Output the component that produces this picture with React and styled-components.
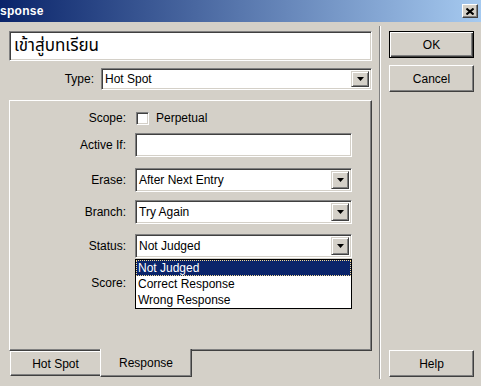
import React from 'react'
import styled, { createGlobalStyle } from 'styled-components'

const Global = createGlobalStyle`
  html, body {
    margin: 0;
    padding: 0;
    background: #d4d0c8;
  }
  body {
    font-family: "Liberation Sans", Arial, sans-serif;
    font-size: 12px;
    color: #000;
  }
`

const Window = styled.div`
  width: 481px;
  height: 386px;
  background: #d4d0c8;
  overflow: hidden;
`

const TitleBar = styled.div`
  height: 22px;
  display: flex;
  align-items: center;
  justify-content: space-between;
  background: linear-gradient(to right, #0a246a, #a6caf0);
  padding: 0 3px 0 0;
  box-sizing: border-box;
`

const Title = styled.span`
  color: #fff;
  font-weight: bold;
  font-size: 12px;
  letter-spacing: 0.3px;
`

const CloseBtn = styled.div`
  width: 16px;
  height: 14px;
  box-sizing: border-box;
  background: #d4d0c8;
  border: 1px solid;
  border-color: #fff #404040 #404040 #fff;
  box-shadow: inset -1px -1px #808080;
  display: flex;
  align-items: center;
  justify-content: center;
`

const Body = styled.div`
  display: flex;
  height: 364px;
  padding-left: 9px;
`

const LeftCol = styled.div`
  width: 363px;
  display: flex;
  flex-direction: column;
  padding-top: 9px;
`

const Separator = styled.div`
  width: 1px;
  margin: 4px 8px 7px 7px;
  background: #808080;
  border-right: 1px solid #fff;
`

const RightCol = styled.div`
  width: 85px;
  display: flex;
  flex-direction: column;
  gap: 7px;
  padding: 9px 0 9px;
`

const sunken = `
  box-sizing: border-box;
  background: #fff;
  border: 1px solid;
  border-color: #808080 #fff #fff #808080;
  box-shadow: inset 1px 1px #404040, inset -1px -1px #d4d0c8;
`

const NameField = styled.div`
  ${sunken}
  height: 30px;
  display: flex;
  align-items: center;
  padding-left: 4px;
  font-family: "Noto Sans Thai", "Noto Sans", "DejaVu Sans", sans-serif;
  font-size: 17px;
`

const TypeRow = styled.div`
  display: flex;
  align-items: center;
  justify-content: flex-end;
  gap: 7px;
  margin-top: 7px;
`

const Label = styled.span`
  text-align: right;
  white-space: nowrap;
`

const SelectBox = styled.div`
  ${sunken}
  width: ${p => p.$w}px;
  height: ${p => p.$h}px;
  display: flex;
  align-items: center;
  padding: 2px 2px 2px 3px;
`

const SelectText = styled.span`
  flex: 1;
  white-space: nowrap;
`

const ArrowBtn = styled.div`
  width: 18px;
  height: 100%;
  box-sizing: border-box;
  background: #d4d0c8;
  border: 1px solid;
  border-color: #d4d0c8 #404040 #404040 #d4d0c8;
  box-shadow: inset 1px 1px #fff, inset -1px -1px #808080;
  display: flex;
  align-items: center;
  justify-content: center;
`

const Panel = styled.div`
  margin-top: 10px;
  height: 251px;
  box-sizing: border-box;
  border: 1px solid;
  border-color: #fff #404040 #404040 #fff;
  box-shadow: inset -1px -1px #808080;
`

const Row = styled.div`
  display: grid;
  grid-template-columns: 116px 217px;
  column-gap: 9px;
  align-items: center;
  height: ${p => p.$h}px;
  margin-top: ${p => p.$mt}px;
`

const Cell = styled.div`
  position: relative;
  display: flex;
  align-items: center;
  gap: 7px;
  height: 100%;
`

const Check = styled.div`
  ${sunken}
  width: 13px;
  height: 13px;
  margin-left: 1px;
`

const TextBox = styled.div`
  ${sunken}
  width: ${p => p.$w}px;
  height: 24px;
`

const DropList = styled.div`
  position: absolute;
  top: 25px;
  left: 0;
  width: 217px;
  box-sizing: border-box;
  background: #fff;
  border: 1px solid #000;
  z-index: 2;
`

const Item = styled.div`
  height: 16px;
  line-height: 16px;
  padding-left: 2px;
  box-sizing: border-box;
  background: ${p => (p.$active ? '#0a246a' : '#fff')};
  color: ${p => (p.$active ? '#fff' : '#000')};
  outline: ${p => (p.$active ? '1px dotted #f5db95' : 'none')};
  outline-offset: -1px;
`

const TabStrip = styled.div`
  display: flex;
`

const Tab = styled.div`
  position: ${p => (p.$active ? 'relative' : 'static')};
  width: ${p => p.$w}px;
  height: ${p => (p.$active ? 28 : 25)}px;
  margin-top: ${p => (p.$active ? -2 : 0)}px;
  margin-left: ${p => (p.$active ? 0 : 1)}px;
  box-sizing: border-box;
  background: #d4d0c8;
  border-left: 1px solid #fff;
  border-top: ${p => (p.$active ? 'none' : '1px solid #fff')};
  border-right: ${p => (p.$active ? '1px solid #404040' : 'none')};
  border-bottom: 1px solid #404040;
  box-shadow: ${p => (p.$active ? 'inset -1px -1px #808080' : 'inset 0 -1px #808080')};
  display: flex;
  align-items: center;
  justify-content: center;
  padding-top: ${p => (p.$active ? 1 : 0)}px;
`

const Button = styled.div`
  height: 27px;
  box-sizing: border-box;
  display: flex;
  align-items: center;
  justify-content: center;
  border: 1px solid;
  border-color: ${p => (p.$default ? '#000' : '#fff #404040 #404040 #fff')};
  box-shadow: ${p =>
    p.$default
      ? 'inset 1px 1px #fff, inset -1px -1px #404040, inset -2px -2px #808080'
      : 'inset -1px -1px #808080'};
  margin-top: ${p => (p.$bottom ? 'auto' : '0')};
`

function Arrow() {
  return (
    <svg width="7" height="4" viewBox="0 0 7 4">
      <path d="M0 0h7L3.5 4z" fill="#000" />
    </svg>
  )
}

function Select({ value, w, h }) {
  return (
    <SelectBox $w={w} $h={h}>
      <SelectText>{value}</SelectText>
      <ArrowBtn>
        <Arrow />
      </ArrowBtn>
    </SelectBox>
  )
}

export default function App() {
  const statuses = ['Not Judged', 'Correct Response', 'Wrong Response']
  return (
    <Window>
      <Global />
      <TitleBar>
        <Title>sponse</Title>
        <CloseBtn>
          <svg width="8" height="7" viewBox="0 0 8 7">
            <path d="M0.5 0.5L7.5 6.5M7.5 0.5L0.5 6.5" stroke="#000" strokeWidth="2" />
          </svg>
        </CloseBtn>
      </TitleBar>
      <Body>
        <LeftCol>
          <NameField>เข้าสู่บทเรียน</NameField>
          <TypeRow>
            <Label>Type:</Label>
            <Select value="Hot Spot" w={271} h={22} />
          </TypeRow>
          <Panel>
            <Row $h={16} $mt={9}>
              <Label>Scope:</Label>
              <Cell>
                <Check />
                <span>Perpetual</span>
              </Cell>
            </Row>
            <Row $h={24} $mt={7}>
              <Label>Active If:</Label>
              <TextBox $w={217} />
            </Row>
            <Row $h={24} $mt={11}>
              <Label>Erase:</Label>
              <Select value="After Next Entry" w={217} h={24} />
            </Row>
            <Row $h={24} $mt={8}>
              <Label>Branch:</Label>
              <Select value="Try Again" w={217} h={24} />
            </Row>
            <Row $h={24} $mt={10}>
              <Label>Status:</Label>
              <Cell>
                <Select value="Not Judged" w={217} h={24} />
                <DropList>
                  {statuses.map((s, i) => (
                    <Item key={s} $active={i === 0}>{s}</Item>
                  ))}
                </DropList>
              </Cell>
            </Row>
            <Row $h={24} $mt={13}>
              <Label>Score:</Label>
              <TextBox $w={60} />
            </Row>
          </Panel>
          <TabStrip>
            <Tab $w={90}>Hot Spot</Tab>
            <Tab $w={92} $active>Response</Tab>
          </TabStrip>
        </LeftCol>
        <Separator />
        <RightCol>
          <Button $default>OK</Button>
          <Button>Cancel</Button>
          <Button $bottom>Help</Button>
        </RightCol>
      </Body>
    </Window>
  )
}
